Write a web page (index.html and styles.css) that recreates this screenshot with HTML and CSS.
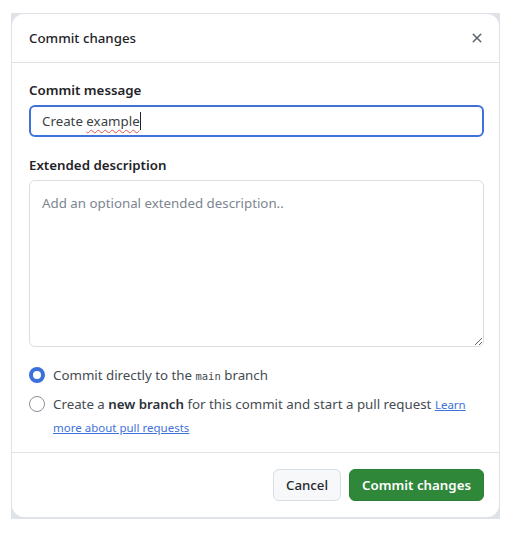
FILE: index.html
```html
<!DOCTYPE html>
<html lang="en">
<head>
<meta charset="utf-8">
<title>Commit changes</title>
<link rel="stylesheet" href="styles.css">
</head>
<body>
<div class="backdrop">
  <div class="dialog">
    <div class="dialog-header">
      <h1 class="dialog-title">Commit changes</h1>
      <button class="close-btn" aria-label="Close">
        <svg width="16" height="16" viewBox="0 0 16 16"><path d="M3.72 3.72a.75.75 0 0 1 1.06 0L8 6.94l3.22-3.22a.75.75 0 1 1 1.06 1.06L9.06 8l3.22 3.22a.75.75 0 1 1-1.06 1.06L8 9.06l-3.22 3.22a.75.75 0 0 1-1.06-1.06L6.94 8 3.72 4.780a.75.75 0 0 1 0-1.06Z" fill="currentColor"/></svg>
      </button>
    </div>
    <div class="dialog-body">
      <label class="field-label">Commit message</label>
      <div class="text-input"><span>Create </span><span class="misspelled">example</span><span class="caret"></span></div>
      <label class="field-label second">Extended description</label>
      <textarea class="text-area" placeholder="Add an optional extended description.."></textarea>
      <div class="radio-group">
        <div class="radio-row">
          <span class="radio checked"></span>
          <span class="radio-text">Commit directly to the <code class="branch">main</code> branch</span>
        </div>
        <div class="radio-row">
          <span class="radio"></span>
          <span class="radio-text wrap">Create a <strong>new branch</strong> for this commit and start a pull request <a class="link" href="#">Learn more about pull requests</a></span>
        </div>
      </div>
    </div>
    <div class="dialog-footer">
      <button class="btn btn-default">Cancel</button>
      <button class="btn btn-primary">Commit changes</button>
    </div>
  </div>
</div>
</body>
</html>
```
FILE: styles.css
```css
* { box-sizing: border-box; }
html, body { margin: 0; padding: 0; background: #ffffff; }
body {
  font-family: "Noto Sans", "Open Sans", sans-serif;
  color: #1f2328;
  font-size: 13.3px;
}
.backdrop {
  margin: 13px 0 0 11px;
  width: 489px;
  background: #dfe2e6;
  padding: 1px 1px 2px 1px;
}
.dialog {
  background: #ffffff;
  border-radius: 12px;
  display: flex;
  flex-direction: column;
}
.dialog-header {
  height: 49px;
  border-bottom: 1px solid #dfe2e6;
  display: flex;
  align-items: center;
  justify-content: space-between;
  padding: 0 14px 0 17px;
}
.dialog-title {
  margin: 0;
  font-size: 13.3px;
  font-weight: 500;
  color: #1f2328;
}
.close-btn {
  border: 0;
  background: none;
  padding: 0;
  width: 16px;
  height: 16px;
  color: #59636e;
  display: flex;
}
.dialog-body {
  padding: 17px 15px 13px 17px;
  display: flex;
  flex-direction: column;
}
.field-label {
  font-size: 13.3px;
  font-weight: 600;
  line-height: 20px;
  margin-bottom: 5px;
  color: #1f2328;
}
.field-label.second { margin-top: 18px; margin-bottom: 5px; }
.text-input {
  height: 32px;
  border: 2px solid #3f72d8;
  border-radius: 6px;
  padding: 0 11px;
  display: flex;
  align-items: center;
  font-size: 13.3px;
  color: #3b3f45;
  white-space: pre;
}
.misspelled {
  text-decoration: underline wavy #e5534b;
  text-underline-offset: 3px;
  text-decoration-thickness: 1px;
}
.caret {
  display: inline-block;
  width: 1px;
  height: 18px;
  background: #1f2328;
}
.text-area {
  height: 167px;
  border: 1px solid #d9dee3;
  border-radius: 6px;
  padding: 12px 12px;
  font-family: inherit;
  font-size: 13.3px;
  line-height: 20px;
  resize: vertical;
  color: #1f2328;
  outline: none;
}
.text-area::placeholder { color: #7d8590; }
.radio-group {
  margin-top: 18px;
  display: flex;
  flex-direction: column;
  gap: 8px;
}
.radio-row {
  display: flex;
  align-items: flex-start;
  gap: 8px;
}
.radio {
  flex: none;
  width: 16px;
  height: 16px;
  border-radius: 50%;
  border: 1px solid #8a919a;
  margin-top: 2px;
}
.radio.checked {
  border: 4.5px solid #3a6fdc;
}
.radio-text {
  font-size: 13.3px;
  line-height: 20px;
  color: #454b52;
}
.radio-text.wrap { line-height: 22px; margin-top: -1px; }
.radio-text strong { font-weight: 600; color: #2b3036; }
.branch {
  font-family: "DejaVu Sans Mono", "Liberation Mono", monospace;
  font-size: 10.5px;
  color: #454b52;
}
.link {
  font-size: 11.5px;
  color: #3f72d8;
  text-decoration: underline;
}
.dialog-footer {
  border-top: 1px solid #dfe2e6;
  padding: 16px 15px 16px 17px;
  display: flex;
  justify-content: flex-end;
  gap: 8px;
}
.btn {
  height: 32px;
  border-radius: 6px;
  font-family: inherit;
  font-size: 13.3px;
  font-weight: 500;
  padding: 0 12px;
  cursor: pointer;
}
.btn-default {
  background: #f6f8fa;
  border: 1px solid #d9dee3;
  color: #25292e;
}
.btn-primary {
  background: #2f873a;
  border: 1px solid #2a7f35;
  color: #ffffff;
  font-weight: 600;
}
```
